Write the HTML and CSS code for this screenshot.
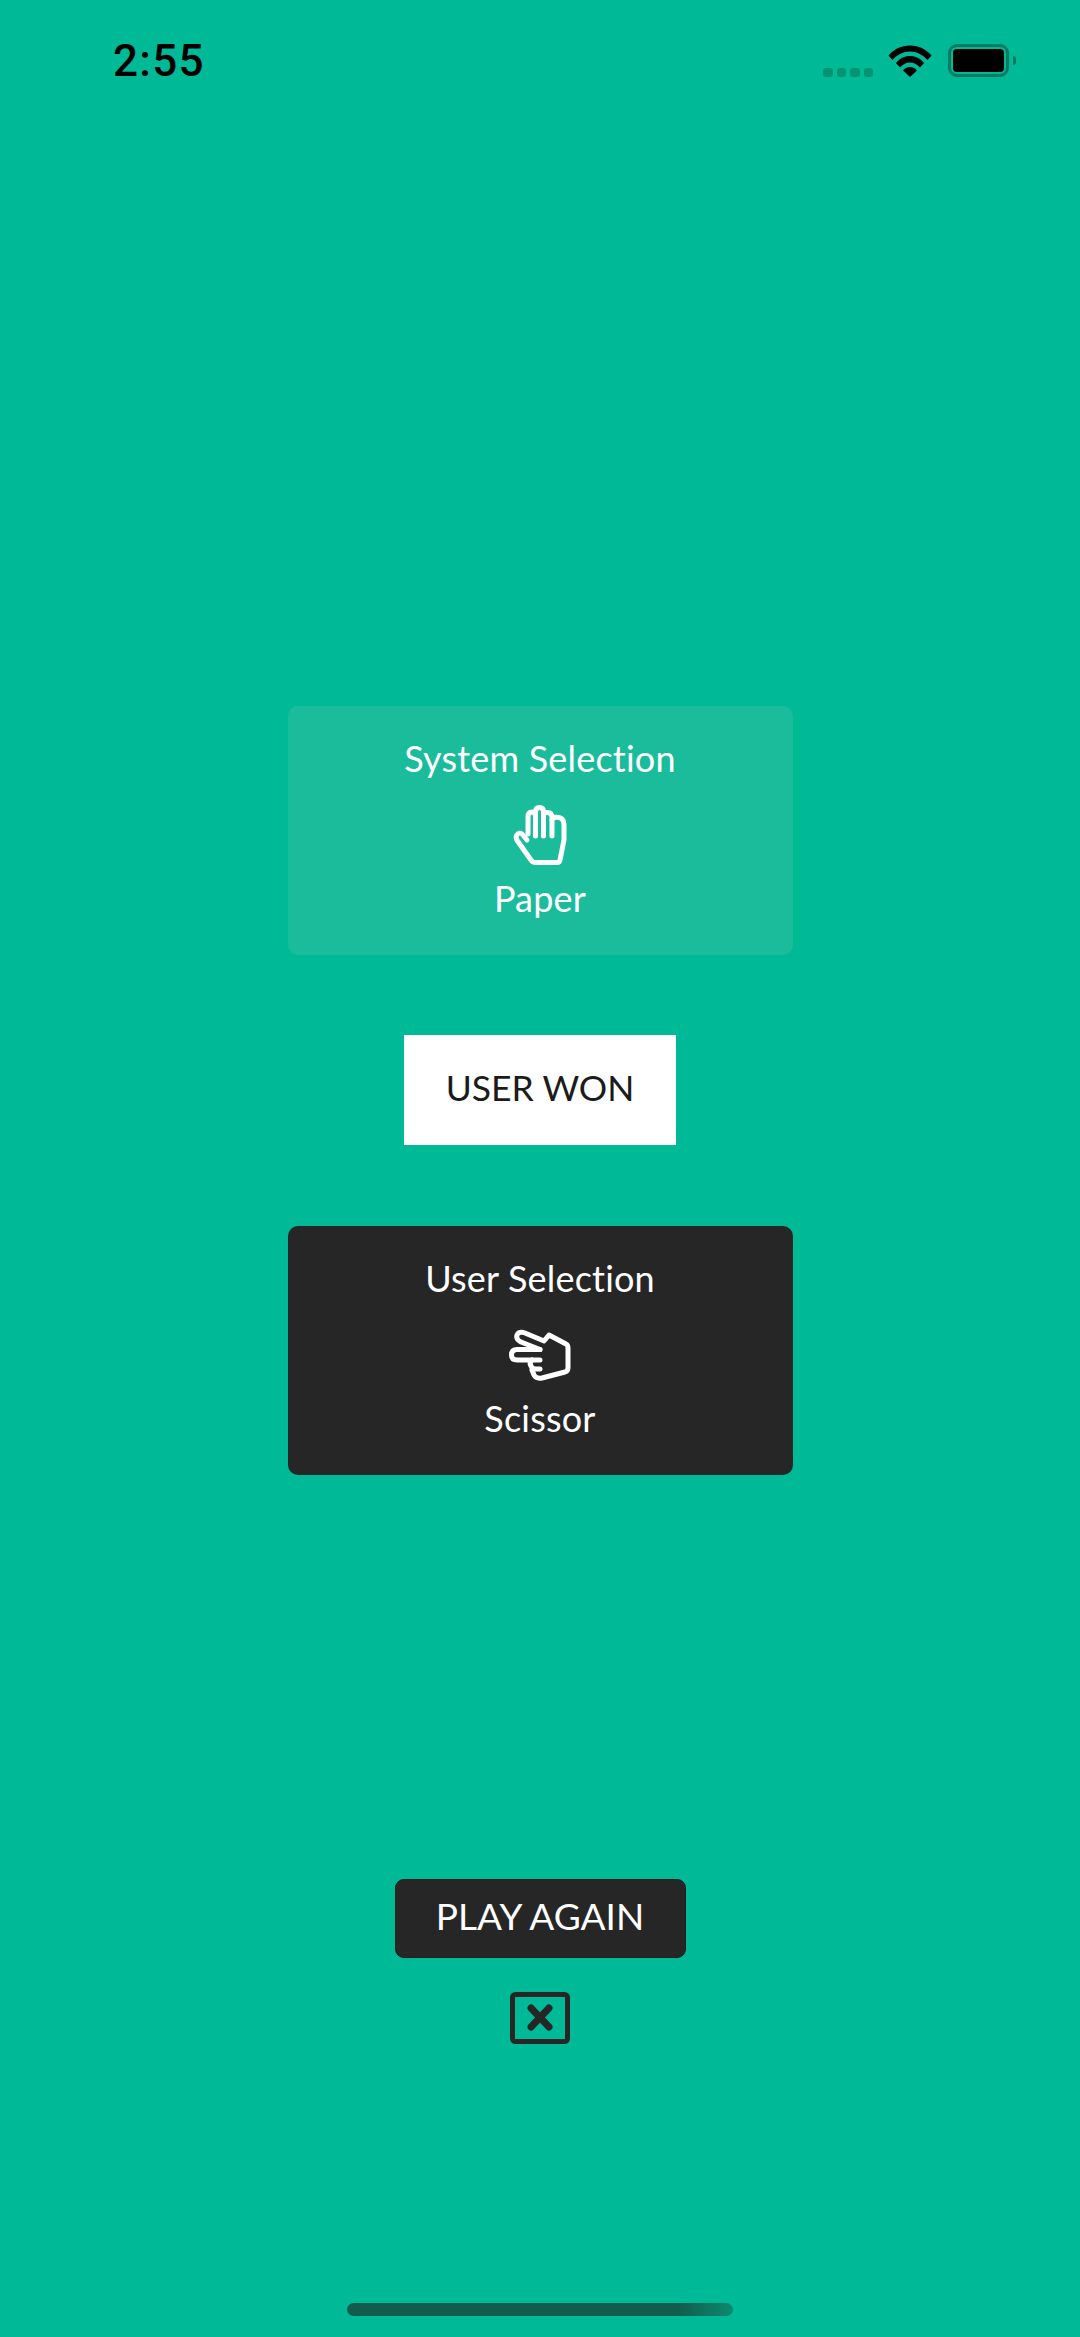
FILE: index.html
```html
<!DOCTYPE html>
<html lang="en">
<head>
<meta charset="utf-8">
<title>Rock Paper Scissor</title>
<link rel="stylesheet" href="styles.css">
</head>
<body>
<div class="screen">
  <header class="status">
    <span class="time">2:55</span>
    <div class="status-icons">
      <div class="signal"><i></i><i></i><i></i><i></i></div>
      <svg class="wifi" width="44" height="32" viewBox="0 0 44 32">
        <path d="M0.5 10.5C6 4 13.5 0.5 22 0.5S38 4 43.5 10.5L39.5 15C34.5 9.5 28.5 6.5 22 6.5S9.500 9.500 4.500 15Z"/>
        <path d="M8 18C11.500 13.500 16.500 11 22 11S32.500 13.500 36 18L32 22.500C29.500 19.500 26 17.500 22 17.500S14.500 19.500 12 22.500Z"/>
        <path d="M15 25.500C16.500 23.500 19 22 22 22S27.500 23.500 29 25.500L22 32Z"/>
      </svg>
      <div class="battery"><div class="battery-level"></div></div>
    </div>
  </header>
  <main class="game">
    <section class="card card-system">
      <div class="card-title">System Selection</div>
      <svg class="hand" width="100" height="70" viewBox="-1 10 100 70">
        <path d="M36 50L32 45Q28 41 25.500 45.500Q24.500 48 26.500 51L40 70Q41.500 72.500 44.500 72.500H66Q68.500 72.500 69 70L73 50V35Q73 28.500 68 27.500Q62 26.500 61 30"/>
        <path d="M37 44V27Q37 22 41 22Q44.500 22 44.500 27"/>
        <path d="M44.500 46V22Q44.500 17.500 48.500 17.500Q52.500 17.500 52.500 22V46"/>
        <path d="M52.500 25Q52.500 22.500 56.500 22.500Q61 22.500 61 28V46"/>
      </svg>
      <div class="card-label">Paper</div>
    </section>
    <div class="result">USER WON</div>
    <section class="card card-user">
      <div class="card-title">User Selection</div>
      <svg class="hand" width="100" height="70" viewBox="0 10 100 70">
        <path d="M50 39.500L31 32Q25.500 29 27 25Q29 21 35 23L54 31L59 25L76 34Q78 35 78 38V58Q78 61 75 62L52 68Q46 69 44 65L42 60"/>
        <path d="M50 39.500H27Q21.500 39.500 21.500 45Q21.500 50 27 50H50"/>
        <path d="M42 50Q39 53 41 56Q42 59 46 59H50"/>
      </svg>
      <div class="card-label">Scissor</div>
    </section>
    <button class="play" type="button">PLAY AGAIN</button>
    <svg class="close" width="60" height="52" viewBox="0 0 60 52">
      <rect x="2.500" y="2.500" width="55" height="47" rx="3"/>
      <path d="M21 16L39 35M39 16L21 35"/>
    </svg>
  </main>
  <div class="home-bar"></div>
</div>
</body>
</html>
```

FILE: styles.css
```css
* { box-sizing: border-box; }
html, body { margin: 0; padding: 0; }
body { font-family: Lato, "Open Sans", sans-serif; }

.screen {
  width: 1080px;
  height: 2337px;
  background: #00b996;
  display: flex;
  flex-direction: column;
  overflow: hidden;
}

.status {
  height: 118px;
  padding: 36px 71px 0 113px;
  display: flex;
  justify-content: space-between;
  align-items: flex-start;
}
.time {
  font-family: Roboto, sans-serif;
  font-weight: 500;
  font-size: 44px;
  line-height: 50px;
  color: #000;
  letter-spacing: 1.300px;
}
.status-icons {
  display: flex;
  align-items: flex-end;
  margin-top: 8px;
  height: 33px;
}
.signal { display: flex; gap: 4px; margin-right: 15px; }
.signal i {
  width: 9.500px;
  height: 9px;
  border-radius: 3px;
  background: #049473;
}
.wifi { fill: #000; margin-right: 16px; }
.battery {
  width: 61px;
  height: 33px;
  border: 3px solid #0a7a63;
  border-radius: 9px;
  padding: 2px;
  position: relative;
}
.battery::after {
  content: "";
  position: absolute;
  right: -10px;
  top: 9px;
  width: 3px;
  height: 9px;
  border-radius: 0 3px 3px 0;
  background: #0a7a63;
}
.battery-level {
  height: 100%;
  background: #000;
  border-radius: 4px;
}

.game {
  padding-top: 588px;
  display: flex;
  flex-direction: column;
  align-items: center;
}

.card {
  width: 505px;
  height: 249px;
  padding-top: 30px;
  border-radius: 10px;
  display: flex;
  flex-direction: column;
  align-items: center;
  color: #fff;
}
.card-system { background: #1abc9c; }
.card-user { background: #262626; margin-top: 81px; }
.card-title, .card-label {
  font-size: 36px;
  line-height: 44px;
  letter-spacing: 0.200px;
}
.hand {
  margin-top: 20px;
  margin-bottom: 6px;
  fill: none;
  stroke: #fff;
  stroke-width: 5;
  stroke-linecap: round;
  stroke-linejoin: round;
}

.result {
  margin-top: 80px;
  width: 272px;
  height: 110px;
  background: #fff;
  color: #1b1b1b;
  font-size: 35.500px;
  line-height: 106px;
  text-align: center;
}

.play {
  margin-top: 404px;
  width: 291px;
  height: 79px;
  border: 1px solid #1c1c1c;
  border-radius: 9px;
  background: #262626;
  color: #fff;
  font-family: inherit;
  font-size: 37px;
  line-height: 44px;
  padding: 0 0 6px;
}
.close {
  margin-top: 34px;
  fill: none;
  stroke: #262626;
}
.close rect { stroke-width: 5; }
.close path { stroke-width: 7; stroke-linecap: round; }

.home-bar {
  margin: 259px auto 0;
  width: 386px;
  height: 13px;
  border-radius: 7px;
  background: linear-gradient(90deg, #125c4e 0%, #125c4e 86%, #0c8a70 100%);
}
```
